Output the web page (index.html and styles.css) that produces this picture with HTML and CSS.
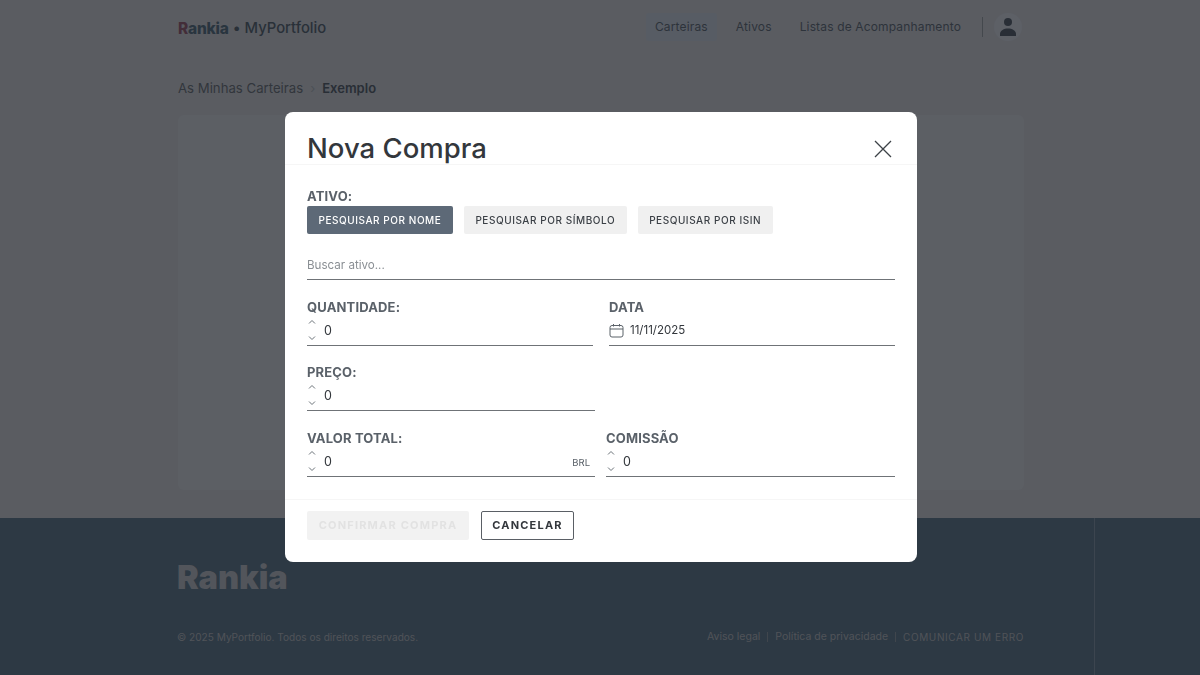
FILE: index.html
```html
<!DOCTYPE html>
<html lang="pt">
<head>
    <meta charset="UTF-8">
    <meta name="viewport" content="width=device-width, initial-scale=1.0">
    <title>MyPortfolio</title>
    <link rel="stylesheet" href="styles.css">
</head>
<body>

<svg class="sprites" width="0" height="0">
    <symbol id="spin" viewBox="0 0 8 24">
        <path d="M1 5.500 4 2.500 7 5.500M1 18.500 4 21.500 7 18.500" fill="none" stroke="#6b7278" stroke-width="1"/>
    </symbol>
</svg>

<header class="topbar">
    <div class="brand"><span class="brand-mark"><span class="brand-r">R</span>ankia</span> <span class="brand-dot">•</span> <span class="brand-name">MyPortfolio</span></div>
    <nav class="nav">
        <a class="nav-link active">Carteiras</a>
        <a class="nav-link">Ativos</a>
        <a class="nav-link last">Listas de Acompanhamento</a>
        <span class="nav-sep"></span>
        <span class="avatar">
            <svg width="18" height="20" viewBox="0 0 18 20"><circle cx="9" cy="5" r="4" fill="#2b3440"/><path d="M1 19v-2c0-3.500 4-5.500 8-5.500s8 2 8 5.500v2z" fill="#2b3440"/></svg>
        </span>
    </nav>
</header>

<main class="page">
    <div class="crumbs">
        <span>As Minhas Carteiras</span>
        <span class="crumb-sep">›</span>
        <strong>Exemplo</strong>
    </div>
    <div class="panel"></div>
</main>

<footer class="footer">
    <div class="footer-logo">Rankia</div>
    <div class="footer-row">
        <span>© 2025 MyPortfolio. Todos os direitos reservados.</span>
        <span class="footer-links">
            <a>Aviso legal</a><i></i><a>Política de privacidade</a><i></i><a class="report">COMUNICAR UM ERRO</a>
        </span>
    </div>
    <span class="footer-line"></span>
</footer>

<div class="overlay">
    <div class="modal">
        <div class="modal-head">
            <h2>Nova Compra</h2>
            <svg class="close" width="18" height="18" viewBox="0 0 18 18"><path d="M1 1 17 17M17 1 1 17" stroke="#3d4247" stroke-width="1.300" fill="none"/></svg>
        </div>
        <div class="modal-body">
            <label class="lbl">ATIVO:</label>
            <div class="tabs">
                <button class="tab on">PESQUISAR POR NOME</button>
                <button class="tab">PESQUISAR POR SÍMBOLO</button>
                <button class="tab">PESQUISAR POR ISIN</button>
            </div>
            <div class="field search"><span class="placeholder">Buscar ativo...</span></div>

            <div class="row row-a">
                <div>
                    <label class="lbl">QUANTIDADE:</label>
                    <div class="field"><svg class="spin" width="8" height="24"><use href="#spin"/></svg><span class="val">0</span></div>
                </div>
                <div>
                    <label class="lbl">DATA</label>
                    <div class="field">
                        <svg class="cal" width="15" height="15" viewBox="0 0 15 15"><rect x="1" y="2.500" width="13" height="11.500" rx="2" fill="none" stroke="#5b6269"/><path d="M1 6h13M4.500 1v2.500M10.500 1v2.500" fill="none" stroke="#5b6269"/></svg>
                        <span class="val date">11/11/2025</span>
                    </div>
                </div>
            </div>

            <div class="row row-b">
                <div>
                    <label class="lbl">PREÇO:</label>
                    <div class="field"><svg class="spin" width="8" height="24"><use href="#spin"/></svg><span class="val">0</span></div>
                </div>
            </div>

            <div class="row row-b">
                <div>
                    <label class="lbl">VALOR TOTAL:</label>
                    <div class="field"><svg class="spin" width="8" height="24"><use href="#spin"/></svg><span class="val">0</span><span class="unit">BRL</span></div>
                </div>
                <div>
                    <label class="lbl">COMISSÃO</label>
                    <div class="field"><svg class="spin" width="8" height="24"><use href="#spin"/></svg><span class="val">0</span></div>
                </div>
            </div>
        </div>
        <div class="modal-foot">
            <button class="btn-confirm" disabled>CONFIRMAR COMPRA</button>
            <button class="btn-cancel">CANCELAR</button>
        </div>
    </div>
</div>

</body>
</html>
```

FILE: styles.css
```css
* {
    box-sizing: border-box;
}
html, body {
    height: 675px;
    overflow: hidden;
}
body {
    font-family: Inter, "Noto Sans", sans-serif;
    background-color: #d9d7dc;
    color: #2b3440;
    margin: 0;
    display: flex;
    flex-direction: column;
}
.sprites {
    display: none;
}

/* top bar */
.topbar {
    height: 56px;
    flex: none;
    padding: 0 178px 2px 178px;
    display: flex;
    align-items: center;
    justify-content: space-between;
}
.brand {
    font-size: 14.800px;
    font-weight: 500;
    color: #2b3a4a;
    display: flex;
    align-items: center;
    gap: 4px;
    margin-top: 2px;
}
.brand-mark {
    font-weight: 800;
    font-size: 15.500px;
    letter-spacing: -0.2px;
    color: #2e4c63;
}
.brand-r {
    color: #8a2f4a;
}
.nav {
    display: flex;
    align-items: center;
    font-size: 12px;
    letter-spacing: 0.150px;
    color: #3c4653;
}
.nav-link {
    padding: 6px 9px;
    height: 28px;
    margin-right: 10px;
    border-radius: 3px;
}
.nav-link.last {
    margin-right: 12px;
}
.nav-link.active {
    background: #d0d6e4;
}
.nav-sep {
    width: 1px;
    height: 20px;
    background: #8b8f95;
    margin-right: 11px;
}
.avatar {
    width: 28px;
    height: 28px;
    border-radius: 50%;
    background: #e4e4ee;
    display: flex;
    align-items: center;
    justify-content: center;
}

/* page */
.page {
    flex: 1;
    padding: 23px 176px 28px 178px;
    display: flex;
    flex-direction: column;
}
.crumbs {
    font-size: 13.200px;
    color: #4c5056;
    display: flex;
    gap: 7px;
    align-items: center;
    height: 18px;
}
.crumbs strong {
    color: #2b3440;
    font-weight: 600;
    font-size: 13px;
}
.crumb-sep {
    color: #a9adb2;
}
.panel {
    flex: 1;
    margin-top: 18px;
    background: #e2e1e5;
    border-radius: 6px;
}

/* footer */
.footer {
    height: 157px;
    flex: none;
    background: #3a5a72;
    padding: 42px 176px 0 177px;
    position: relative;
    color: #b6b6bb;
}
.footer-logo {
    font-size: 32.500px;
    font-weight: 900;
    line-height: 36px;
    color: #bfbfc6;
}
.footer-row {
    margin-top: 34px;
    display: flex;
    justify-content: space-between;
    align-items: center;
    font-size: 10.100px;
}
.footer-links {
    display: flex;
    align-items: center;
    font-size: 10.500px;
}
.footer-links i {
    width: 1px;
    height: 10px;
    background: #7f8a95;
    margin: 0 7px;
}
.report {
    letter-spacing: 0.600px;
    font-size: 10px;
}
.footer-line {
    position: absolute;
    left: 1094px;
    top: 0;
    bottom: 0;
    width: 1px;
    background: #6f8799;
}

/* modal */
.overlay {
    position: fixed;
    inset: 0;
    background: rgba(40, 45, 50, 0.72);
    display: flex;
    justify-content: center;
    align-items: flex-start;
    padding: 112px 0 0 2px;
}
.modal {
    width: 632px;
    height: 450px;
    background: #fff;
    border-radius: 8px;
    display: flex;
    flex-direction: column;
}
.modal-head {
    height: 53px;
    padding: 0 25px 0 22px;
    border-bottom: 1px solid #f6f6f6;
    display: flex;
    align-items: center;
    justify-content: space-between;
    flex: none;
}
.modal-head h2 {
    margin: 20px 0 0;
    font-size: 27.500px;
    font-weight: 500;
    color: #33373c;
}
.close {
    margin-top: 21px;
}
.modal-body {
    flex: 1;
    padding: 23px 22px 0;
}
.lbl {
    display: block;
    font-size: 13px;
    font-weight: 700;
    line-height: 16px;
    letter-spacing: 0.150px;
    color: #5a6169;
}
.tabs {
    display: flex;
    gap: 11px;
    margin-top: 2px;
}
.tab {
    font-family: inherit;
    height: 28px;
    padding: 0 11.500px;
    border: none;
    border-radius: 2px;
    background: #f0f0f0;
    color: #3a3f45;
    font-size: 10px;
    font-weight: 500;
    letter-spacing: 0.550px;
}
.tab.on {
    background: #5d6977;
    color: #fff;
}
.field {
    height: 31px;
    display: flex;
    align-items: center;
    border-bottom: 1px solid #6f7377;
    font-size: 12.500px;
    color: #33373c;
}
.search {
    margin-top: 14px;
    height: 32px;
    padding-top: 2px;
}
.placeholder {
    color: #8a8f94;
    font-size: 11.600px;
}
.spin {
    flex: none;
    margin: 0 8px 0 1px;
}
.cal {
    flex: none;
    margin-right: 6px;
}
.val {
    flex: 1;
}
.val.date {
    font-size: 11.500px;
}
.unit {
    font-size: 9.500px;
    color: #5a6169;
    margin: 2px 5px 0 0;
}
.row {
    display: grid;
    grid-template-columns: 1fr 1fr;
}
.row-a {
    gap: 16px;
    margin-top: 19px;
}
.row-b {
    grid-template-columns: 288px 1fr;
    gap: 11px;
    margin-top: 18px;
}
.row-b + .row-b {
    margin-top: 19px;
}
.modal-foot {
    height: 63px;
    flex: none;
    padding: 11px 22px;
    border-top: 1px solid #f6f6f6;
    display: flex;
    gap: 12px;
    align-items: flex-start;
}
.btn-confirm, .btn-cancel {
    font-family: inherit;
    height: 29px;
    padding: 0 0 2px;
    border-radius: 2px;
    font-size: 11px;
    font-weight: 700;
    letter-spacing: 1.200px;
}
.btn-confirm {
    width: 162px;
    background: #f2f2f2;
    color: #e2e2e2;
    border: none;
}
.btn-cancel {
    width: 93px;
    background: #fff;
    color: #33373c;
    border: 1px solid #5a5f65;
}
```
